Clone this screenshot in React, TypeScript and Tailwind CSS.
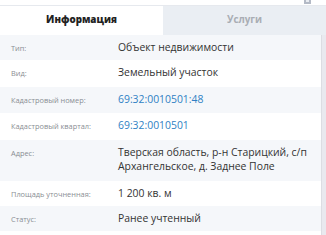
import React from "react";

type Row = { label: string; value: string; link?: boolean; h: string };

const rows: Row[] = [
  { label: "Тип:", value: "Объект недвижимости", h: "h-[25px]" },
  { label: "Вид:", value: "Земельный участок", h: "h-[27px]" },
  { label: "Кадастровый номер:", value: "69:32:0010501:48", link: true, h: "h-[26px]" },
  { label: "Кадастровый квартал:", value: "69:32:0010501", link: true, h: "h-[27px]" },
  { label: "Адрес:", value: "Тверская область, р-н Старицкий, с/п Архангельское, д. Заднее Поле", h: "h-[41px]" },
  { label: "Площадь уточненная:", value: "1 200 кв. м", h: "h-[25px]" },
  { label: "Статус:", value: "Ранее учтенный", h: "h-[25px]" },
];

const App = () => {
  return (
    <div className="w-[326px] h-[235px] overflow-hidden bg-white font-['Open_Sans',sans-serif]">
      <div className="h-[6px] flex justify-end pr-[15px] border-b border-[#e6e9ee]">
        <svg width="7" height="4" viewBox="0 0 7 4" className="block">
          <rect x="0" y="0" width="7" height="4" fill="#b4bac6" />
          <rect x="2" y="0" width="3" height="2" fill="#e9ecf1" />
        </svg>
      </div>
      <div className="flex h-[29px]">
        <div className="w-[163px] flex items-center justify-center bg-white text-[9.8px] font-extrabold text-[#222]">
          Информация
        </div>
        <div className="flex-1 flex items-center justify-center bg-[#eaeef3] text-[9.8px] font-bold text-[#a9adb4]">
          Услуги
        </div>
      </div>
      <div className="flex">
        <div className="w-[321px]">
          {rows.map((r, i) => (
            <div
              key={r.label}
              className={`flex items-start ${r.h} ${i % 2 === 0 ? "bg-[#f5f7fa]" : "bg-white"}`}
            >
              <div className="w-[118px] shrink-0 pl-[11px] pt-[7px] text-[7.4px] leading-[12px] text-[#8a8e94]">
                {r.label}
              </div>
              <div
                className={`flex-1 pr-[6px] pt-[5px] text-[10.4px] leading-[14px] ${
                  r.link ? "text-[#2f7fc4]" : "text-[#333]"
                }`}
              >
                {r.value}
              </div>
            </div>
          ))}
        </div>
        <div className="w-[5px] h-[200px] bg-[#e9e9ef] border-l border-[#dcdde3]" />
      </div>
    </div>
  );
};

export default App;
